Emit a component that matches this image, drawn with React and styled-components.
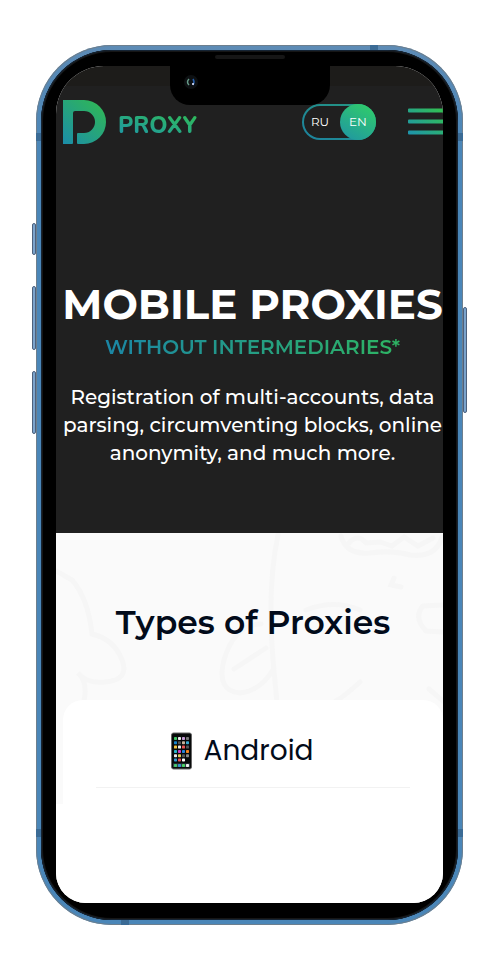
import React from "react";
import styled, { createGlobalStyle } from "styled-components";

const GlobalStyle = createGlobalStyle`
  * { box-sizing: border-box; }
  body { margin: 0; background: #fff; font-family: Montserrat, Inter, "Noto Sans", sans-serif; }
`;

const Stage = styled.main`
  padding: 45px 36px;
`;

const Phone = styled.div`
  position: relative;
  padding: 5px;
  border-radius: 76px;
  background: linear-gradient(#5d8bb5, #4a86b8 12%, #4a86b8);
  box-shadow: inset 0 0 0 1px #6d7f8e;
`;

const Bezel = styled.div`
  position: relative;
  padding: 16px 15px 17px;
  border-radius: 71px;
  background: #000;
  box-shadow: inset 0 0 0 1px #152434, inset 0 0 0 2px #161616;
`;

const SideButton = styled.span`
  position: absolute;
  top: ${(p) => p.$top}px;
  ${(p) => p.$side}: -4px;
  width: 4px;
  height: ${(p) => p.$length}px;
  border: 1px solid #4d617d;
  border-radius: 2px;
  background: #7ba4cd;
`;

const AntennaBand = styled.span`
  position: absolute;
  ${(p) => p.$place}
  width: ${(p) => (p.$flat ? 8 : 5)}px;
  height: ${(p) => (p.$flat ? 5 : 8)}px;
  background: #3b6b95;
`;

const Notch = styled.div`
  position: absolute;
  top: 5px;
  left: 50%;
  width: 160px;
  height: 50px;
  transform: translateX(-50%);
  border-radius: 0 0 20px 20px;
  background: #000;
  z-index: 2;
`;

const Speaker = styled.span`
  position: absolute;
  top: 0;
  left: 45px;
  width: 70px;
  height: 4px;
  border-radius: 2px;
  background: #161616;
`;

const Camera = styled.svg`
  position: absolute;
  top: 19px;
  left: 13px;
`;

const Screen = styled.div`
  overflow: hidden;
  border-radius: 48px 48px 30px 30px;
  background: #fff;
`;

const Hero = styled.section`
  padding: 34px 0 66px 6px;
  background: linear-gradient(#1d1c1a 20px, #202020 20px);
  color: #fff;
  text-align: center;
`;

const Header = styled.header`
  display: flex;
  align-items: center;
`;

const Brand = styled.a`
  display: flex;
  align-items: center;
  gap: 12px;
  margin-right: auto;
  text-decoration: none;
`;

const BrandName = styled.span`
  padding-top: 8px;
  background: linear-gradient(15deg, #1e97a4 10%, #2eb85f 75%);
  background-clip: text;
  color: transparent;
  font: 800 23px/28px Nunito, "Open Sans", sans-serif;
`;

const Languages = styled.div`
  display: flex;
  margin-right: 31px;
  border: 2px solid transparent;
  border-radius: 18px;
  background:
    linear-gradient(#202020, #202020) padding-box,
    linear-gradient(30deg, #1c83a0, #26977d) border-box;
`;

const Language = styled.button`
  width: 36px;
  height: 36px;
  margin: -2px;
  padding: 0;
  border: 0;
  border-radius: 50%;
  background: ${(p) => (p.$active ? "linear-gradient(30deg, #1f94a5, #31d065)" : "transparent")};
  color: #fff;
  font: 400 12px/34px Montserrat, Inter, sans-serif;

  & + & {
    margin-left: 4px;
  }
`;

const MenuButton = styled.button`
  display: flex;
  width: 36px;
  padding: 0;
  border: 0;
  background: none;
`;

const Title = styled.h1`
  margin: 136px 0 5px;
  font-size: 42px;
  font-weight: 700;
  line-height: 48px;
  white-space: nowrap;
`;

const Subtitle = styled.h2`
  width: fit-content;
  margin: 0 auto 22px;
  background: linear-gradient(90deg, #1b86a5, #2eb463);
  background-clip: text;
  color: transparent;
  font-size: 20px;
  font-weight: 600;
  line-height: 28px;
`;

const Lead = styled.p`
  margin: 0;
  font-size: 20px;
  font-weight: 500;
  line-height: 28px;
  white-space: nowrap;
`;

const Types = styled.section`
  position: relative;
  padding: 67px 0 0 7px;
  background: #fafafa;
`;

const Doodle = styled.svg`
  position: absolute;
  inset: 0 auto auto 0;
`;

const Heading = styled.h2`
  position: relative;
  margin: 0 0 56px;
  color: #020b1a;
  font-size: 33px;
  font-weight: 600;
  line-height: 44px;
  text-align: center;
`;

const Card = styled.article`
  position: relative;
  padding: 32px 33px 16px;
  border-radius: 20px 20px 0 0;
  background: #fff;
`;

const CardHeader = styled.div`
  display: flex;
  align-items: center;
  justify-content: center;
  gap: 12px;
  padding: 0 22px 17px 0;
  border-bottom: 1px solid #f2f2f2;
`;

const CardTitle = styled.h3`
  margin: 0;
  color: #020b1a;
  font: 400 28px/38px Poppins, Inter, sans-serif;
`;

const Sheet = styled.div`
  height: 99px;
  background: #fff;
`;

const apps = [
  ["#40c563", "#ececec", "#c59ad7", "#777"],
  ["#1685cf", "#555", "#c7b39b", "#38aacf"],
  ["#f3c642", "#eee", "#ee5454", "#555"],
  ["#26b4c7", "#cb43cd", "#2686db", "#f4831f"],
  ["#eee", "#e5cf5a", "#555", "#888"],
  ["#319bd8", "#ee5555", "#fff"],
];
const dock = ["#46c86d", "#3896d0", "#4ad464", "#eee"];

function Logo() {
  return (
    <svg width="44" height="44" viewBox="0 0 44 44" aria-hidden="true">
      <defs>
        <linearGradient id="logo" x1="0" y1="1" x2="0.8" y2="0.1">
          <stop stopColor="#1b8da9" />
          <stop offset="1" stopColor="#2eb45c" />
        </linearGradient>
      </defs>
      <path fill="url(#logo)" d="M1 0H22A22 22 0 0 1 22 44H16Q15 44 15 43V34Q15 33 16 33H22A11 11 0 0 0 22 11H13Q11 11 11 13V43Q11 44 10 44H1Z" />
    </svg>
  );
}

function MenuIcon() {
  return (
    <svg width="36" height="28" viewBox="0 0 36 28" aria-hidden="true">
      <defs>
        <linearGradient id="menu" gradientUnits="userSpaceOnUse" x1="4" y1="28" x2="30" y2="0">
          <stop stopColor="#1e94ac" />
          <stop offset="1" stopColor="#31bd56" />
        </linearGradient>
      </defs>
      <path fill="url(#menu)" d="M2 0.5H36V4.5H2Q1 4.5 1 3.5V1.5Q1 0.5 2 0.5ZM2 11.5H36V15.5H2Q1 15.5 1 14.5V12.5Q1 11.5 2 11.5ZM2 22.5H36V26.5H2Q1 26.5 1 25.5V23.5Q1 22.5 2 22.5Z" />
    </svg>
  );
}

function PhoneIcon() {
  return (
    <svg width="21" height="38" viewBox="0 0 21 38" aria-hidden="true">
      <rect x="0.5" y="1" width="20" height="36" rx="2" fill="#080a0a" stroke="#666" />
      {apps.map((row, y) =>
        row.map((color, x) => (
          <rect key={`${x}-${y}`} x={3 + x * 4} y={5 + y * 4.3} width="3" height="3" rx="0.7" fill={color} />
        ))
      )}
      <path d="M2 31.5H19V35H2Z" fill="#344149" />
      {dock.map((color, x) => (
        <rect key={color} x={3 + x * 4} y="32" width="3" height="3" rx="0.7" fill={color} />
      ))}
    </svg>
  );
}

export default function App() {
  return (
    <>
      <GlobalStyle />
      <Stage>
        <Phone>
          <SideButton $side="left" $top={178} $length={32} />
          <SideButton $side="left" $top={241} $length={64} />
          <SideButton $side="left" $top={326} $length={63} />
          <SideButton $side="right" $top={262} $length={106} />
          <AntennaBand $place="top: 88px; left: 0;" />
          <AntennaBand $place="top: 88px; right: 0;" />
          <AntennaBand $place="bottom: 88px; left: 0;" />
          <AntennaBand $place="bottom: 88px; right: 0;" />
          <AntennaBand $flat $place="top: 0; right: 85px;" />
          <AntennaBand $flat $place="bottom: 0; left: 85px;" />
          <Bezel>
            <Notch>
              <Speaker />
              <Camera width="16" height="16" viewBox="0 0 16 16" aria-hidden="true">
                <circle cx="8" cy="8" r="7" fill="#0d1012" />
                <path d="M6 5Q3 8 6 11" fill="none" stroke="#679b89" strokeWidth="1.5" />
                <path d="M10 5Q12 8 10 11" fill="none" stroke="#245dac" strokeWidth="1.5" />
                <circle cx="10" cy="10" r="1" fill="#e8eaff" />
              </Camera>
            </Notch>
            <Screen>
              <Hero>
                <Header>
                  <Brand href="#">
                    <Logo />
                    <BrandName>PROXY</BrandName>
                  </Brand>
                  <Languages>
                    <Language type="button">RU</Language>
                    <Language type="button" $active aria-pressed="true">EN</Language>
                  </Languages>
                  <MenuButton type="button" aria-label="Menu">
                    <MenuIcon />
                  </MenuButton>
                </Header>
                <Title>MOBILE PROXIES</Title>
                <Subtitle>WITHOUT INTERMEDIARIES*</Subtitle>
                <Lead>
                  Registration of multi-accounts, data
                  <br />
                  parsing, circumventing blocks, online
                  <br />
                  anonymity, and much more.
                </Lead>
              </Hero>
              <Types>
                <Doodle width="387" height="270" viewBox="0 0 387 270" fill="none" stroke="#f6f6f6" strokeWidth="5" strokeLinecap="round" aria-hidden="true">
                  <path d="M0 38L16 47Q32 65 36 101Q58 106 66 127Q74 147 49 149Q31 151 22 140Q32 149 28 168M222 2Q211 54 217 127L221 170M205 91Q178 92 168 127Q160 158 184 160Q204 158 217 137M178 136L210 115M250 77Q278 66 304 77" />
                  <path d="M285 3Q290 22 314 20Q336 17 354 22Q380 25 386 4M293 10Q302 0 310 10L324 9L336 13L348 4L362 13L377 5M338 45L335 52L345 54M387 72L367 73Q357 84 370 98L387 99M304 149Q290 162 280 168M373 156L387 168" />
                </Doodle>
                <Heading>Types of Proxies</Heading>
                <Card>
                  <CardHeader>
                    <PhoneIcon />
                    <CardTitle>Android</CardTitle>
                  </CardHeader>
                </Card>
              </Types>
              <Sheet />
            </Screen>
          </Bezel>
        </Phone>
      </Stage>
    </>
  );
}
